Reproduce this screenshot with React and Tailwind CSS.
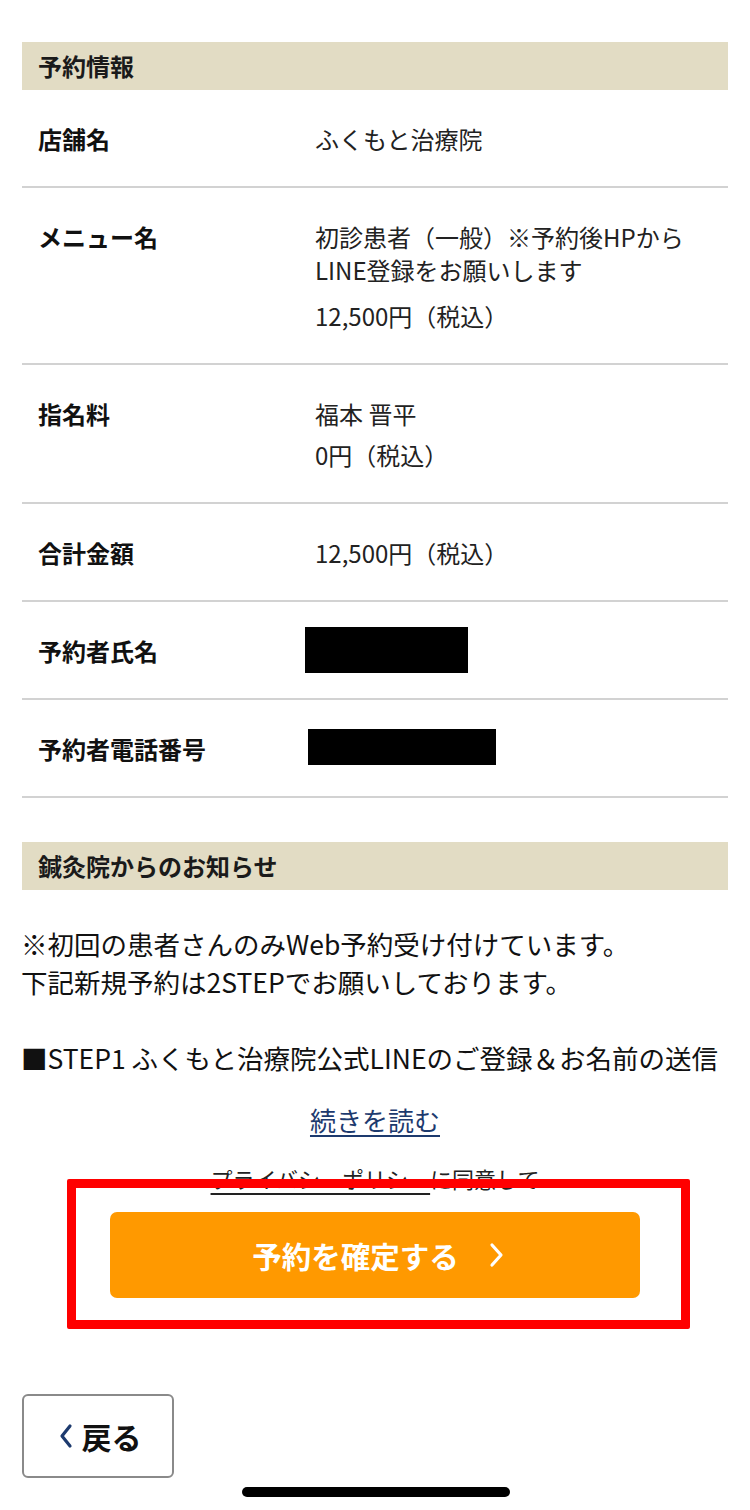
const FONT = "font-['Noto_Sans_CJK_JP','Noto_Sans',sans-serif]";

const rows = [
  { label: '店舗名', values: [['ふくもと治療院']] },
  {
    label: 'メニュー名',
    gap: 'gap-[13px]',
    values: [['初診患者（一般）※予約後HPから', 'LINE登録をお願いします'], ['12,500円（税込）']],
  },
  { label: '指名料', gap: 'gap-[8px]', values: [['福本 晋平'], ['0円（税込）']] },
  { label: '合計金額', values: [['12,500円（税込）']] },
  { label: '予約者氏名', redact: 'top-[-7px] left-[-10px] w-[163px] h-[46px]' },
  { label: '予約者電話番号', redact: 'top-[-3px] left-[-7px] w-[188px] h-[36px]' },
];

function SectionHead({ children }) {
  return (
    <div className="h-[48px] bg-[#e2dcc4] px-4 flex items-center text-[24px] font-bold text-[#1a1a1a]">
      {children}
    </div>
  );
}

function Row({ label, values, redact, gap = 'gap-[11px]' }) {
  return (
    <div className="flex pt-[32px] pb-[31px] border-b-2 border-[#d2d2d2] text-[24px] leading-[33px]">
      <div className="w-[293px] shrink-0 pl-4 font-bold text-[#111]">{label}</div>
      <div className={`flex flex-col ${gap} text-[#222]`}>
        {redact ? (
          <div className="relative h-[33px]">
            <div className={`absolute bg-black ${redact}`} />
          </div>
        ) : (
          values.map((lines, i) => (
            <p key={i}>
              {lines.map((l, j) => (
                <span key={j} className="block">{l}</span>
              ))}
            </p>
          ))
        )}
      </div>
    </div>
  );
}

export default function App() {
  return (
    <div className={`relative min-h-[1510px] bg-white ${FONT}`}>
      <div className="px-[22px] pt-[42px]">
        <SectionHead>予約情報</SectionHead>
        {rows.map((r) => (
          <Row key={r.label} {...r} />
        ))}

        <div className="mt-[44px]">
          <SectionHead>鍼灸院からのお知らせ</SectionHead>
        </div>
        <div className="mt-[35px] text-[26.5px] leading-[38px] text-[#111] whitespace-nowrap -ml-px">
          <p>※初回の患者さんのみWeb予約受け付けています。</p>
          <p>下記新規予約は2STEPでお願いしております。</p>
          <p>&nbsp;</p>
          <p>■STEP1 ふくもと治療院公式LINEのご登録＆お名前の送信</p>
        </div>

        <div className="mt-[23px] flex justify-center">
          <a href="#" className="text-[26px] leading-[40px] text-[#1d3a6e] underline underline-offset-[4px]">
            続きを読む
          </a>
        </div>

        <p className="mt-[23px] text-center text-[22px] leading-[30px] text-[#222]">
          <span className="underline underline-offset-[5px]">プライバシーポリシー</span>に同意して
        </p>

        <div className="mt-[19px] flex justify-center">
          <button className="w-[530px] h-[86px] rounded-[7px] bg-[#ff9900] text-white text-[29.5px] font-bold flex items-center justify-center gap-[30px] pl-[6px]">
            予約を確定する
            <svg width="15" height="26" viewBox="0 0 15 26" fill="none">
              <polyline points="3,3 12,13 3,23" stroke="white" strokeWidth="3.2" strokeLinecap="round" strokeLinejoin="round" />
            </svg>
          </button>
        </div>

        <button className="mt-[96px] w-[152px] h-[84px] rounded-[6px] border-2 border-[#8a8a8a] bg-white flex items-center justify-center gap-[9px] pl-[4px] text-[30px] font-bold text-[#111]">
          <svg width="14" height="26" viewBox="0 0 14 26" fill="none">
            <polyline points="11,3 3,13 11,23" stroke="#1d3a6e" strokeWidth="3.2" strokeLinecap="round" strokeLinejoin="round" />
          </svg>
          戻る
        </button>
      </div>

      {/* red annotation frame */}
      <div className="absolute left-[67px] top-[1179px] w-[623px] h-[150px] border-[9px] border-[#ff0000] rounded-[2px] pointer-events-none" />

      {/* home indicator */}
      <div className="absolute left-[242px] top-[1487px] w-[268px] h-[10px] rounded-full bg-black" />
    </div>
  );
}
